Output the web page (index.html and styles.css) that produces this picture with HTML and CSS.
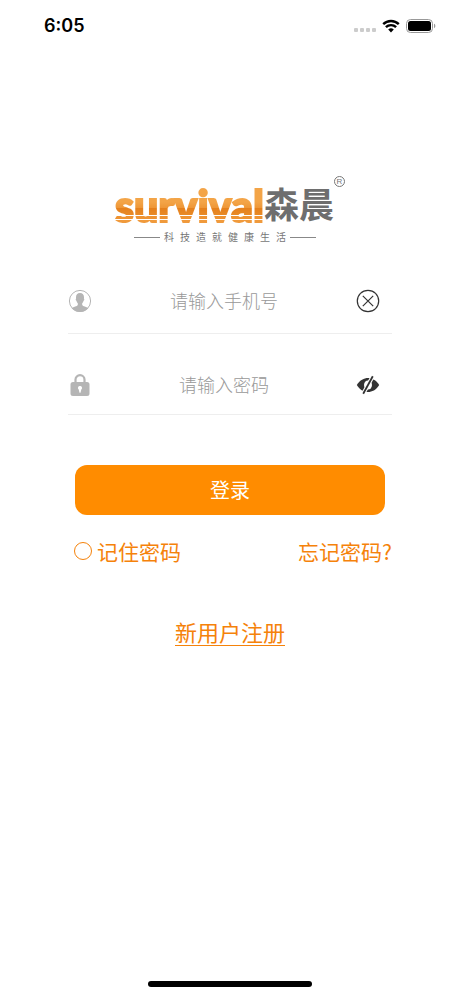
FILE: index.html
```html
<!DOCTYPE html>
<html lang="zh-CN">
<head>
<meta charset="utf-8">
<meta name="viewport" content="width=device-width, initial-scale=1">
<title>登录</title>
<link rel="stylesheet" href="styles.css">
</head>
<body>
<div class="screen">
  <header class="status">
    <span class="time">6:05</span>
    <div class="indicators">
      <span class="signal"><i></i><i></i><i></i><i></i></span>
      <svg class="wifi" viewBox="0 0 18 14" aria-hidden="true">
        <path d="M1.2 5.1a11.2 11.2 0 0 1 15.6 0" />
        <path d="M3.9 8.2a7.2 7.2 0 0 1 10.2 0" />
        <path class="solid" d="M9 13.4 6.2 10.6a4 4 0 0 1 5.6 0z" />
      </svg>
      <svg class="battery" viewBox="0 0 30 14" aria-hidden="true">
        <rect class="shell" x="0.5" y="0.5" width="26" height="13" rx="4" />
        <rect x="2" y="2" width="23" height="10" rx="2.5" />
        <path class="cap" d="M28 4.8c1.8.6 1.8 3.8 0 4.4z" />
      </svg>
    </div>
  </header>

  <main class="content">
    <div class="brand">
      <div class="wordmark">
        <span class="latin">survival</span>
        <span class="hanzi">森晨</span>
        <span class="mark">R</span>
      </div>
      <p class="slogan">科技造就健康生活</p>
    </div>

    <form class="form">
      <div class="field">
        <label for="phone" aria-label="手机号">
          <svg class="icon" viewBox="0 0 24 24" aria-hidden="true">
            <circle class="ring" cx="12" cy="12" r="10.6" />
            <path d="M12 4.1c2.7 0 4 1.7 4 4.2 0 .7 0 1.200-.1 1.500.6.1.5 1.700-.3 2-.3 1.100-.8 1.900-1.400 2.500v1.700c.7 1.500 4 1.700 6.200 3.200A10.800 10.800 0 0 1 12 22.900a10.800 10.800 0 0 1-8.400-3.700c2.200-1.500 5.500-1.700 6.200-3.200v-1.700c-.6-.6-1.100-1.400-1.400-2.500-.8-.3-.9-1.900-.3-2C8 9.500 8 9 8 8.300c0-2.500 1.300-4.200 4-4.200z" />
          </svg>
        </label>
        <input id="phone" type="tel" placeholder="请输入手机号">
        <button class="action" type="button" aria-label="清除">
          <svg class="icon" viewBox="0 0 24 24" aria-hidden="true">
            <circle class="line" cx="12" cy="12" r="10.700" />
            <path class="line" d="M6.800 6.800 17.200 17.200M17.200 6.800 6.800 17.200" />
          </svg>
        </button>
      </div>

      <div class="field">
        <label for="password" aria-label="密码">
          <svg class="icon" viewBox="0 0 24 24" aria-hidden="true">
            <path class="shackle" d="M7.500 10V6.600a4.500 4.500 0 0 1 9 0V10" />
            <path fill-rule="evenodd" d="M5 9h14a2.500 2.500 0 0 1 2.500 2.500v9A2.500 2.500 0 0 1 19 23H5a2.500 2.500 0 0 1-2.500-2.500v-9A2.500 2.500 0 0 1 5 9zm7 4a1.900 1.900 0 0 0-1.300 3.400l.8 3.400h1l.8-3.400A1.900 1.900 0 0 0 12 13z" />
          </svg>
        </label>
        <input id="password" type="password" placeholder="请输入密码">
        <button class="action" type="button" aria-label="显示密码">
          <svg class="icon" viewBox="0 0 24 24" aria-hidden="true">
            <path d="M.8 12C4 7 8 5 12 5s8 2 11.200 7c-3.200 5-7.200 7-11.200 7S4 17 .8 12z" />
            <ellipse class="iris" cx="12" cy="12" rx="4" ry="4.500" />
            <path class="gap" d="M17.200 2.500 6.800 21.500" />
            <path class="slash" d="M16.800 3.200 7.200 20.800" />
          </svg>
        </button>
      </div>

      <button class="submit" type="submit">登录</button>

      <div class="options">
        <label class="remember"><input type="checkbox">记住密码</label>
        <a href="#forgot">忘记密码?</a>
      </div>
    </form>

    <a class="register" href="#register">新用户注册</a>
  </main>

  <div class="home"></div>
</div>
</body>
</html>
```
FILE: styles.css
```css
* {
  box-sizing: border-box;
}

body {
  margin: 0;
  background: #fff;
  font-family: "Noto Sans CJK SC", sans-serif;
}

.screen {
  display: flex;
  flex-direction: column;
  min-height: 100vh;
  padding-bottom: 9px;
}

.status {
  display: flex;
  align-items: center;
  justify-content: space-between;
  height: 51px;
  padding: 0 24px 0 44px;
}

.time {
  font: 600 18px/24px Inter, sans-serif;
}

.indicators {
  display: flex;
  align-items: center;
  gap: 6px;
}

.signal {
  display: flex;
  gap: 2px;
  padding-top: 8px;
}

.signal i {
  width: 4px;
  height: 4px;
  border-radius: 1px;
  background: #ccc;
}

.wifi {
  width: 18px;
  height: 14px;
  fill: none;
  stroke: #000;
  stroke-width: 2.4;
}

.wifi .solid {
  fill: #000;
  stroke: none;
}

.battery {
  width: 30px;
  height: 14px;
}

.battery .shell {
  fill: none;
  stroke: #999;
}

.battery .cap {
  fill: #999;
}

.content {
  display: flex;
  flex: 1;
  flex-direction: column;
  align-items: stretch;
  padding: 121px 68px 0;
}

.brand {
  display: flex;
  flex-direction: column;
  align-items: center;
}

.wordmark {
  display: flex;
  align-items: flex-start;
  height: 58px;
}

.latin {
  margin-top: 12px;
  font: 900 43px/44px Lato, sans-serif;
  color: transparent;
  background: linear-gradient(#f3a447 18px, #ee9636 24px, #e5801c 24px, #e88a26 31px, transparent 31px, transparent 32px, #ee9332 32px, #ee9332 35px, transparent 35px, transparent 36px, #f09a3c 36px);
  -webkit-background-clip: text;
  background-clip: text;
  -webkit-text-stroke: 2px transparent;
}

.hanzi {
  margin-top: 8px;
  font-size: 35px;
  font-weight: 700;
  line-height: 46px;
  color: #6e6e6e;
}

.mark {
  width: 11px;
  height: 11px;
  margin-top: 4px;
  border: 1px solid #777;
  border-radius: 50%;
  font: 8px/9px "Liberation Sans", sans-serif;
  text-align: center;
  color: #777;
}

.slogan {
  display: flex;
  align-items: center;
  gap: 4px;
  margin: 0;
  padding-right: 10px;
  font-size: 10px;
  line-height: 14px;
  letter-spacing: 6px;
  color: #777;
}

.slogan::before,
.slogan::after {
  width: 26px;
  height: 1px;
  background: #888;
  content: "";
}

.slogan::after {
  margin-left: -6px;
}

.form {
  display: flex;
  flex-direction: column;
  margin-top: 24px;
}

.field {
  display: flex;
  align-items: center;
  height: 66px;
  padding-right: 12px;
  border-bottom: 1px solid #eee;
}

.field + .field {
  height: 60px;
  margin-top: 21px;
}

.icon {
  display: block;
  width: 24px;
  height: 24px;
  fill: #b5b5b5;
}

.icon .ring {
  fill: none;
  stroke: #b5b5b5;
}

.icon .shackle {
  fill: none;
  stroke: #b5b5b5;
  stroke-width: 2.2;
}

.field input {
  flex: 1;
  min-width: 0;
  padding: 0;
  border: 0;
  outline: 0;
  background: none;
  font: 300 18px/27px "Noto Sans CJK SC", sans-serif;
  text-align: center;
}

.field input::placeholder {
  color: #999;
  opacity: 1;
}

.action {
  padding: 0;
  border: 0;
  background: none;
}

.action .icon {
  fill: #333;
  stroke-width: 1.2;
}

.action .line {
  fill: none;
  stroke: #333;
}

.action .iris {
  fill: #fff;
}

.action .gap {
  stroke: #fff;
  stroke-width: 4;
}

.action .slash {
  stroke: #333;
  stroke-width: 1.8;
}

.submit {
  height: 50px;
  margin: 50px 7px 0;
  border: 0;
  border-radius: 12px;
  background: #ff8c00;
  font: 400 20px/30px "Noto Sans CJK SC", sans-serif;
  color: #fff;
}

.options {
  display: flex;
  align-items: center;
  justify-content: space-between;
  margin-top: 20px;
  padding-left: 6px;
  font-size: 21px;
  line-height: 32px;
}

.options,
a {
  color: #f5820a;
  text-decoration: none;
}

.remember {
  display: flex;
  align-items: center;
  gap: 5px;
}

.remember input {
  width: 18px;
  height: 18px;
  margin: 0;
  border: 1px solid #f5820a;
  border-radius: 50%;
  appearance: none;
}

.register {
  align-self: center;
  margin-top: 50px;
  border-bottom: 1px solid #f5820a;
  font-size: 22px;
  line-height: 28px;
}

.home {
  align-self: center;
  width: 164px;
  height: 6px;
  border-radius: 3px;
  background: #000;
}
```
